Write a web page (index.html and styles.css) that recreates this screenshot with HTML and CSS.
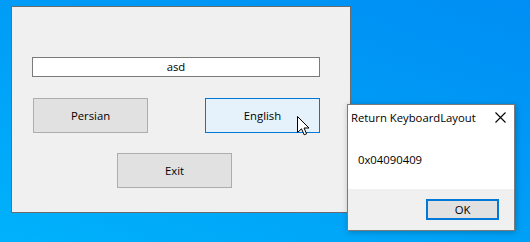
FILE: index.html
```html
<!DOCTYPE html>
<html lang="en">
<head>
    <meta charset="UTF-8">
    <title>Keyboard Layout</title>
    <link rel="stylesheet" href="styles.css">
</head>
<body>

<div class="desktop">
    <!-- main form -->
    <div class="form-window">
        <div class="textbox">asd</div>
        <div class="button-row">
            <button class="btn">Persian</button>
            <button class="btn hover">English</button>
        </div>
        <div class="exit-row">
            <button class="btn">Exit</button>
        </div>
    </div>

    <!-- message box -->
    <div class="msgbox">
        <div class="msg-title">
            <span>Return KeyboardLayout</span>
            <svg class="close" width="11" height="11" viewBox="0 0 11 11">
                <path d="M0.5 0.5 L10.5 10.5 M10.5 0.5 L0.5 10.5" stroke="#000" stroke-width="1.1" fill="none"/>
            </svg>
        </div>
        <div class="msg-body">0x04090409</div>
        <div class="msg-footer">
            <button class="ok-btn">OK</button>
        </div>
    </div>

    <svg class="cursor" width="13" height="20" viewBox="0 0 13 20">
        <path d="M0.5 0.5 L0.5 16.5 L4.5 12.8 L7.2 18.8 L9.6 17.8 L7 12 L12 12 Z" fill="#fff" stroke="#000" stroke-width="1" stroke-linejoin="miter"/>
    </svg>
</div>

</body>
</html>
```

FILE: styles.css
```css
body {
    margin: 0;
    font-family: "Open Sans", "Noto Sans", Arial, sans-serif;
    font-size: 11.3px;
    color: #000;
}
.desktop {
    width: 530px;
    height: 242px;
    position: relative;
    overflow: hidden;
    background: linear-gradient(200deg, #008ef4 0%, #009cf6 45%, #00b2fb 100%);
}
.form-window {
    position: absolute;
    left: 11px;
    top: 6px;
    width: 338px;
    height: 205px;
    border: 1px solid #6b6b6b;
    background-color: #f0f0f0;
}
.textbox {
    margin: 50px 0 0 20px;
    width: 286px;
    height: 18px;
    line-height: 18px;
    border: 1px solid #7a7a7a;
    background-color: #fff;
    text-align: center;
}
.button-row {
    display: flex;
    gap: 57px;
    margin: 21px 0 0 21px;
}
.exit-row {
    margin: 20px 0 0 105px;
}
.btn {
    width: 115px;
    height: 35px;
    border: 1px solid #adadad;
    background-color: #e1e1e1;
    font-family: inherit;
    font-size: 11.3px;
    color: #000;
    padding: 0;
}
.btn.hover {
    border-color: #0078d7;
    background-color: #e5f1fb;
}
.msgbox {
    position: absolute;
    left: 347px;
    top: 104px;
    width: 166px;
    height: 125px;
    border: 1px solid #7a7a7a;
    background-color: #fff;
    box-shadow: 1px 1px 6px rgba(0, 0, 0, 0.25);
    display: flex;
    flex-direction: column;
}
.msg-title {
    height: 25px;
    display: flex;
    align-items: center;
    justify-content: space-between;
    padding: 0 8px 0 3px;
}
.close {
    display: block;
}
.msg-body {
    height: 59px;
    padding-left: 10px;
    line-height: 59px;
}
.msg-footer {
    flex: 1;
    background-color: #f0f0f0;
    display: flex;
    justify-content: flex-end;
    align-items: flex-start;
    padding: 10px 15px 0 0;
}
.ok-btn {
    width: 73px;
    height: 21px;
    border: 2px solid #0078d7;
    background-color: #e1e1e1;
    font-family: inherit;
    font-size: 11.3px;
    padding: 0;
}
.cursor {
    position: absolute;
    left: 297px;
    top: 116px;
}
```
